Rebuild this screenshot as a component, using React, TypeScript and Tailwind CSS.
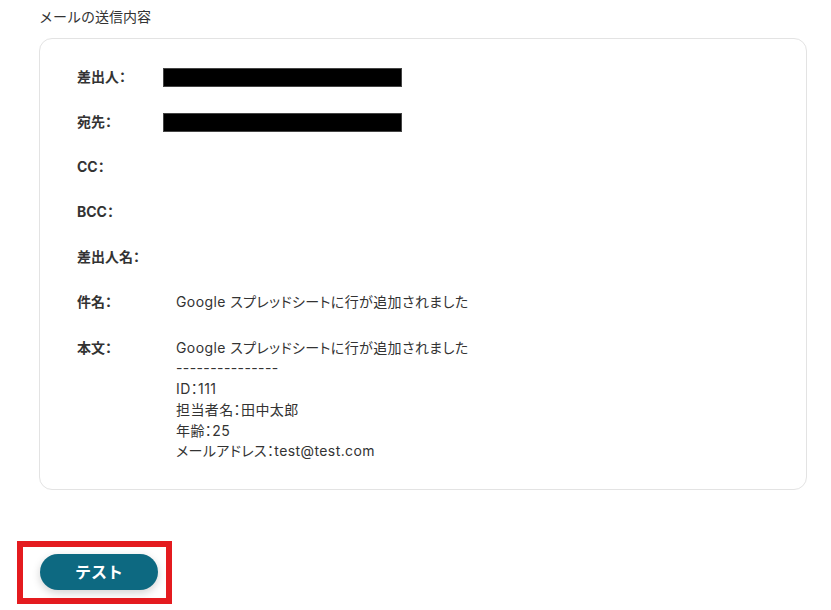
import React from 'react';

const font = { fontFamily: 'Inter, "Noto Sans CJK JP", sans-serif' };

interface Row {
  label: string;
  value?: string[];
  masked?: boolean;
}

const rows: Row[] = [
  { label: '差出人：', masked: true },
  { label: '宛先：', masked: true },
  { label: 'CC：' },
  { label: 'BCC：' },
  { label: '差出人名：' },
  { label: '件名：', value: ['Google スプレッドシートに行が追加されました'] },
  {
    label: '本文：',
    value: [
      'Google スプレッドシートに行が追加されました',
      '---------------',
      'ID：111',
      '担当者名：田中太郎',
      '年齢：25',
      'メールアドレス：test@test.com',
    ],
  },
];

const App: React.FC = () => {
  return (
    <div className="w-[831px] h-[610px] bg-white text-[#333] overflow-hidden" style={font}>
      <h2 className="ml-[39px] pt-[7px] text-[14px] leading-[20px] text-[#333]">メールの送信内容</h2>

      <div className="ml-[39px] mt-[11px] w-[768px] rounded-[13px] border border-[#e3e3e3] pl-[37px] pt-[28px] pb-[27px] [font-feature-settings:'palt']">
        <div className="flex flex-col gap-[25px]">
          {rows.map((row) => (
            <div key={row.label} className="flex items-start">
              <div className="w-[86px] shrink-0 text-[14px] leading-[20px] font-bold text-[#333]">{row.label}</div>
              {row.masked && <div className="mt-[1px] h-[19px] w-[239px] bg-black border border-[#444]" />}
              {row.value && (
                <div className="pl-[13px] text-[14px] leading-[20.7px] tracking-[0.4px] text-[#333]">
                  {row.value.map((line, i) => (
                    <div key={i}>{line}</div>
                  ))}
                </div>
              )}
            </div>
          ))}
        </div>
      </div>

      {/* highlighted button */}
      <div className="ml-[17px] mt-[51px] w-[155px] h-[63px] border-[6px] border-[#e41b1f] pl-[17px] pt-[7px]">
        <button className="w-[118px] h-[36px] rounded-full bg-[#0d6981] text-white text-[16px] font-bold shadow-[0_3px_8px_rgba(0,0,0,0.18)]">
          テスト
        </button>
      </div>
    </div>
  );
};

export default App;
